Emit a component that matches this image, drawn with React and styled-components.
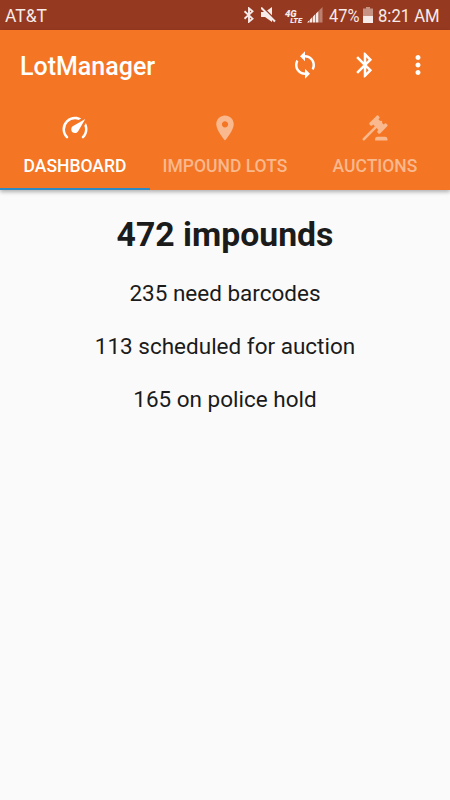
import React from 'react';
import styled, { createGlobalStyle } from 'styled-components';

const GlobalStyle = createGlobalStyle`
  body {
    margin: 0;
    background: #fafafa;
    font-family: Roboto, 'Liberation Sans', sans-serif;
  }
`;

const Screen = styled.div`
  min-height: 800px;
  background: #fafafa;
  overflow: hidden;
`;

const StatusBar = styled.div`
  display: flex;
  align-items: center;
  justify-content: space-between;
  height: 30px;
  padding: 0 10px 0 5px;
  box-sizing: border-box;
  background: #963921;
  color: #f6ebe8;
`;

const StatusText = styled.span`
  display: block;
  width: ${({ $width }) => $width};
  margin: 2px 0 0 ${({ $gap }) => $gap || 0};
  font-size: 18px;
  line-height: 30px;
  white-space: nowrap;
  transform: scaleX(${({ $stretch }) => $stretch || 1});
  transform-origin: left center;
`;

const StatusIcons = styled.div`
  display: flex;
  align-items: center;
  height: 30px;
`;

const StatusSvg = styled.svg`
  display: block;
  flex: none;
  margin-left: ${({ $gap }) => $gap || 0};
`;

const Network = styled.span`
  display: flex;
  flex-direction: column;
  width: 17px;
  margin: 4px 0 0 9px;
  font-size: 9.5px;
  font-style: italic;
  font-weight: 900;
  line-height: 6px;

  small {
    align-self: flex-end;
    font-size: 7.5px;
    line-height: 7px;
  }
`;

const Header = styled.header`
  background: #f47523;
  color: #fff;
  box-shadow: 0 2px 4px rgba(0, 0, 0, 0.3);
`;

const Toolbar = styled.div`
  display: flex;
  align-items: center;
  height: 70px;
  padding: 0 10px 0 20px;
`;

const Title = styled.h1`
  flex: 1;
  margin: 3px 0 0;
  font-size: 25px;
  font-weight: 500;
  line-height: 30px;
`;

const Action = styled.button`
  display: flex;
  align-items: center;
  justify-content: center;
  width: ${({ $width }) => $width || '60px'};
  height: 60px;
  padding: 0;
  border: 0;
  background: none;
  color: inherit;
`;

const Tabs = styled.nav`
  display: flex;
  height: 90px;
`;

const Tab = styled.button`
  display: flex;
  flex: 1 1 0;
  flex-direction: column;
  align-items: center;
  height: 90px;
  box-sizing: border-box;
  padding: 13px 0 0;
  border: 0;
  border-bottom: 2px solid ${({ $active }) => ($active ? '#2f8ac4' : 'transparent')};
  background: none;
  color: ${({ $active }) => ($active ? '#fff' : '#f9b88d')};
  font-family: inherit;
  font-size: 17.5px;
  font-weight: 500;
  line-height: 20px;
  white-space: nowrap;

  span {
    margin-top: 13px;
  }
`;

const Summary = styled.main`
  display: flex;
  flex-direction: column;
  align-items: center;
  padding-top: 25px;
  color: #1b1b1b;
`;

const Total = styled.h2`
  margin: 0 0 23px;
  font-size: 33.75px;
  font-weight: 700;
  line-height: 40px;
`;

const Stat = styled.p`
  margin: 0 0 23px;
  font-size: 22.5px;
  font-weight: 400;
  line-height: 30px;
`;

const paths = {
  sync:
    'M12 4V1L8 5l4 4V6c3.31 0 6 2.69 6 6 0 1.01-.25 1.97-.7 2.8l1.46 1.46C19.54 15.03 20 13.57 20 12c0-4.42-3.58-8-8-8zm0 14c-3.31 0-6-2.69-6-6 0-1.01.25-1.97.7-2.8L5.24 7.74C4.46 8.97 4 10.43 4 12c0 4.42 3.58 8 8 8v3l4-4-4-4v3z',
  bluetooth:
    'M17.71 7.71L12 2h-1v7.59L6.41 5 5 6.41 10.59 12 5 17.59 6.41 19 11 14.41V22h1l5.71-5.71-4.3-4.29 4.3-4.29zM13 5.83l1.88 1.88L13 9.59V5.83zm1.88 10.46L13 18.17v-3.76l1.88 1.88z',
  more:
    'M12 8c1.1 0 2-.9 2-2s-.9-2-2-2-2 .9-2 2 .9 2 2 2zm0 2c-1.1 0-2 .9-2 2s.9 2 2 2 2-.9 2-2-.9-2-2-2zm0 6c-1.1 0-2 .9-2 2s.9 2 2 2 2-.9 2-2-.9-2-2-2z',
  gauge:
    'M12,16A3,3 0 0,1 9,13C9,11.88 9.61,10.9 10.5,10.39L20.21,4.77L14.68,14.35C14.18,15.33 13.17,16 12,16M12,3C13.81,3 15.5,3.5 16.97,4.32L14.87,5.53C14,5.19 13,5 12,5A8,8 0 0,0 4,13C4,15.21 4.89,17.21 6.34,18.65H6.35C6.74,19.04 6.74,19.67 6.35,20.06C5.96,20.45 5.32,20.45 4.93,20.07V20.07C3.12,18.26 2,15.76 2,13A10,10 0 0,1 12,3M22,13C22,15.76 20.88,18.26 19.07,20.07V20.07C18.68,20.45 18.05,20.45 17.66,20.06C17.27,19.67 17.27,19.04 17.66,18.65V18.65C19.11,17.2 20,15.21 20,13C20,12 19.81,11 19.46,10.1L20.67,8C21.5,9.5 22,11.18 22,13Z',
  pin:
    'M12 2C8.13 2 5 5.13 5 9c0 5.25 7 13 7 13s7-7.75 7-13c0-3.87-3.13-7-7-7zm0 9.5c-1.38 0-2.5-1.12-2.5-2.5s1.12-2.5 2.5-2.5 2.5 1.12 2.5 2.5-1.12 2.5-2.5 2.5z',
  gavel:
    'M2.3,20.28L11.9,10.68L10.5,9.26L9.78,9.97C9.39,10.36 8.76,10.36 8.37,9.97L7.66,9.26C7.27,8.87 7.27,8.24 7.66,7.85L13.32,2.19C13.71,1.8 14.34,1.8 14.73,2.19L15.44,2.9C15.83,3.29 15.83,3.92 15.44,4.31L14.73,5L16.15,6.43C16.54,6.04 17.17,6.04 17.56,6.43C17.95,6.82 17.95,7.46 17.56,7.85L18.97,9.26L19.68,8.55C20.07,8.16 20.71,8.16 21.1,8.55L21.8,9.26C22.19,9.65 22.19,10.29 21.8,10.68L16.15,16.33C15.76,16.72 15.12,16.72 14.73,16.33L14.03,15.63C13.63,15.24 13.63,14.6 14.03,14.21L14.73,13.5L13.32,12.09L3.71,21.7C3.32,22.09 2.69,22.09 2.3,21.7C1.91,21.31 1.91,20.67 2.3,20.28M20,19A2,2 0 0,1 22,21V22H12V21A2,2 0 0,1 14,19H20Z',
};

const Icon = ({ name }) => (
  <svg width="30" height="30" viewBox="0 0 24 24" fill="currentColor">
    <path d={paths[name]} />
  </svg>
);

const tabs = [
  { label: 'DASHBOARD', icon: 'gauge' },
  { label: 'IMPOUND LOTS', icon: 'pin' },
  { label: 'AUCTIONS', icon: 'gavel' },
];

const stats = ['235 need barcodes', '113 scheduled for auction', '165 on police hold'];

const App = () => (
  <Screen>
    <GlobalStyle />
    <StatusBar>
      <StatusText $stretch={0.97}>AT&amp;T</StatusText>
      <StatusIcons>
        <StatusSvg width="12" height="16" viewBox="0 0 12 16" fill="none" stroke="currentColor">
          <path d="M1.5 4.2l8 7.4L6 14.6V1.4l3.5 3-8 7.4" strokeWidth="1.9" />
        </StatusSvg>
        <StatusSvg $gap="6px" width="15" height="16" viewBox="0 0 15 16" fill="currentColor">
          <path d="M0 5h4l7-5v15l-7-5H0z" />
          <path d="M1.5 0l14 14" stroke="#963921" strokeWidth="1.6" />
          <path d="M0 .5l14 14" stroke="currentColor" strokeWidth="2" />
        </StatusSvg>
        <Network>
          4G
          <small>LTE</small>
        </Network>
        <StatusSvg $gap="5px" width="16" height="16" viewBox="0 0 16 16" fill="currentColor">
          <path d="M0 15.5h2.5V13zM3 15.5h2.4v-5.4L3 12.5zM6 15.5h2.4V7.1L6 9.5zM9 15.5h2.5V4L9 6.5z" />
          <path d="M12.2 15.5h3.3V0l-3.3 3.3z" opacity="0.4" />
        </StatusSvg>
        <StatusText $gap="6px" $width="34px" $stretch={0.91}>
          47%
        </StatusText>
        <StatusSvg width="10" height="16" viewBox="0 0 10 16" fill="currentColor">
          <path d="M3 0h4v1.5h3V9H0V1.5h3z" opacity="0.5" />
          <path d="M0 9h10v7H0z" />
        </StatusSvg>
        <StatusText $gap="5px" $width="62px" $stretch={0.925}>
          8:21 AM
        </StatusText>
      </StatusIcons>
    </StatusBar>
    <Header>
      <Toolbar>
        <Title>LotManager</Title>
        <Action aria-label="Sync">
          <Icon name="sync" />
        </Action>
        <Action aria-label="Bluetooth">
          <Icon name="bluetooth" />
        </Action>
        <Action aria-label="More options" $width="45px">
          <Icon name="more" />
        </Action>
      </Toolbar>
      <Tabs>
        {tabs.map(({ label, icon }, index) => (
          <Tab key={label} $active={index === 0}>
            <Icon name={icon} />
            <span>{label}</span>
          </Tab>
        ))}
      </Tabs>
    </Header>
    <Summary>
      <Total>472 impounds</Total>
      {stats.map(stat => (
        <Stat key={stat}>{stat}</Stat>
      ))}
    </Summary>
  </Screen>
);

export default App;
